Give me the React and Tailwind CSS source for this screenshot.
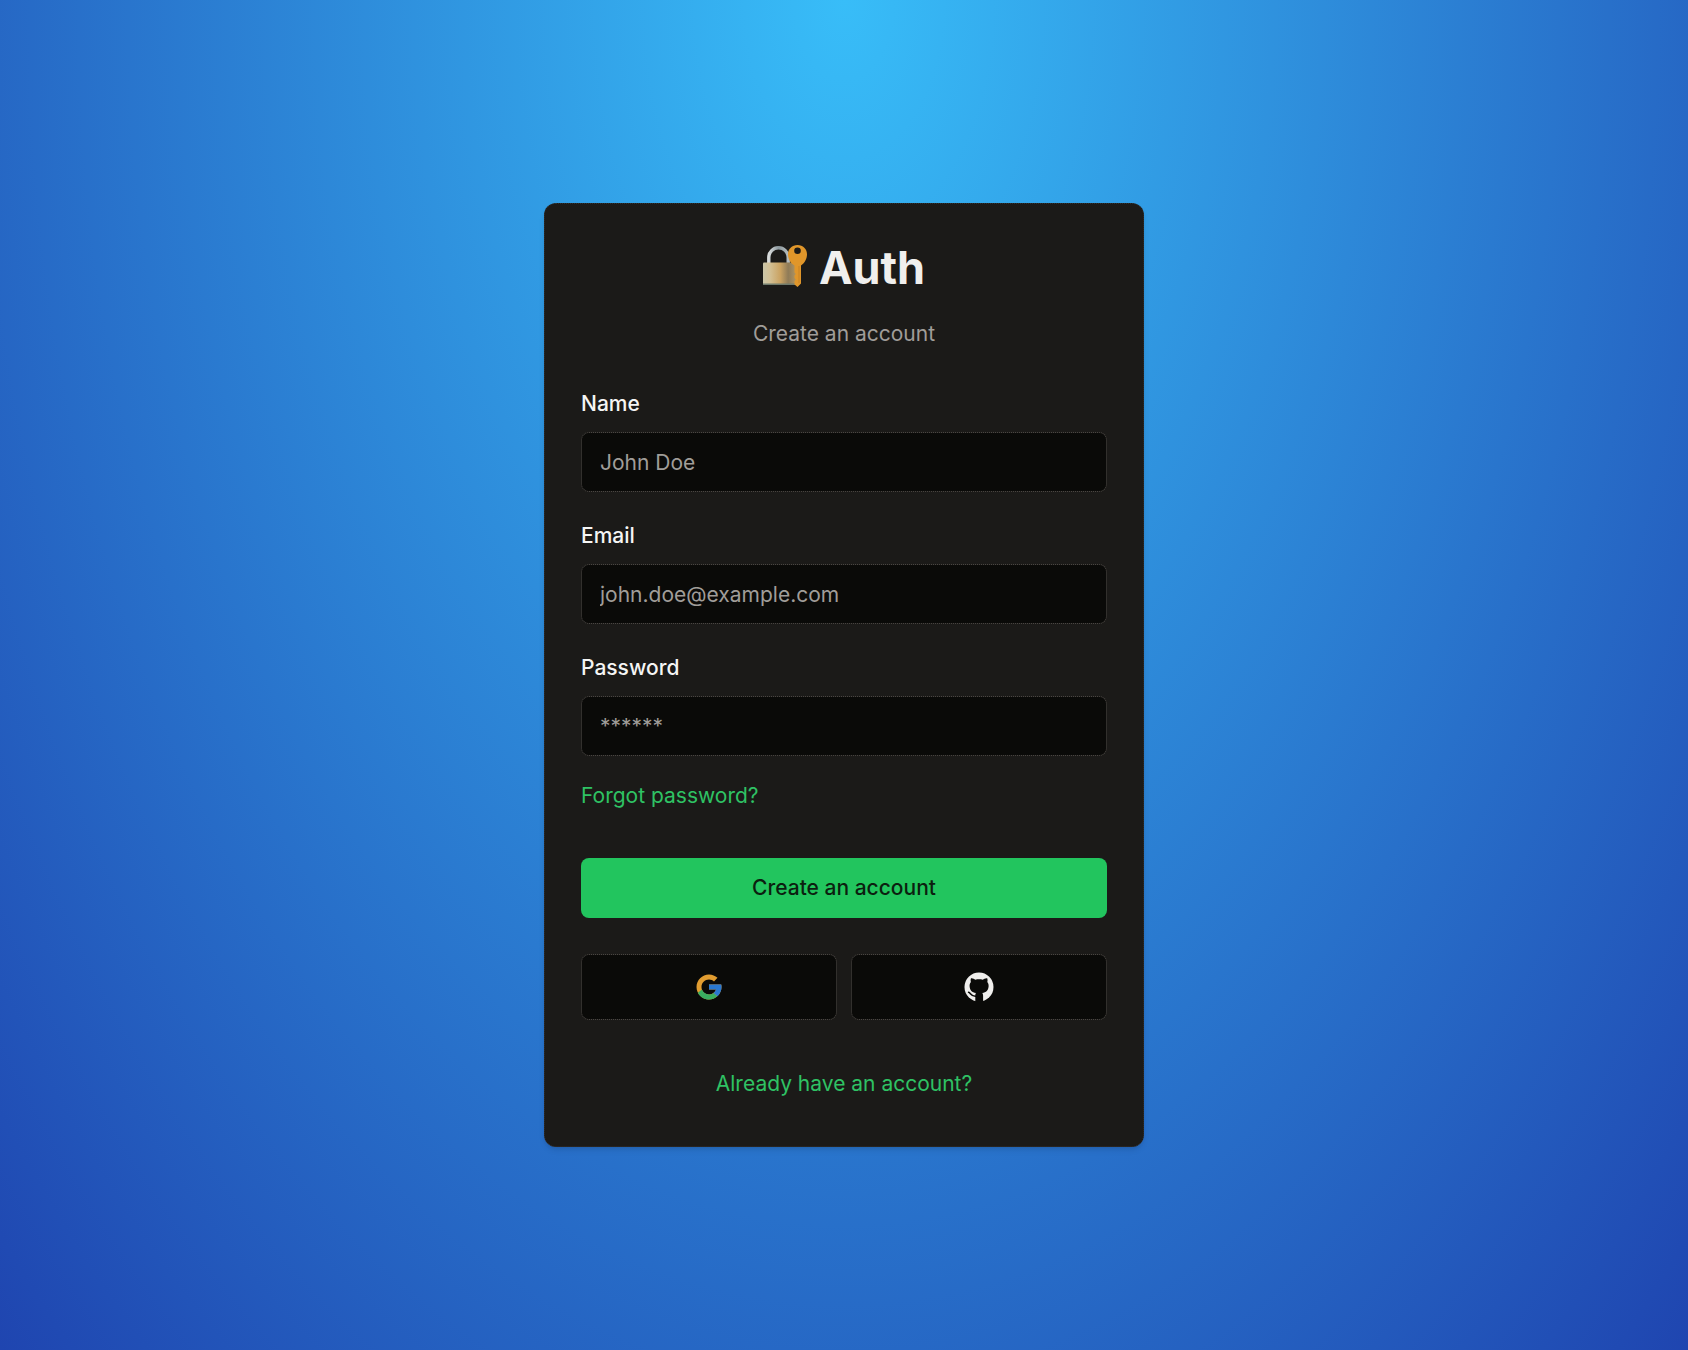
function LockAndKey() {
  return (
    <svg viewBox="0 0 44 48" className="h-12 w-11 shrink-0" aria-hidden="true">
      <defs>
        <linearGradient id="lockBody" x1="0" x2="1">
          <stop offset="0" stopColor="#cbc6a8" />
          <stop offset=".2" stopColor="#d3c094" />
          <stop offset=".5" stopColor="#caa261" />
          <stop offset=".72" stopColor="#8f7b58" />
          <stop offset="1" stopColor="#b89a62" />
        </linearGradient>
        <linearGradient id="shackle" x1="0" x2="1">
          <stop offset="0" stopColor="#d9dcdc" />
          <stop offset=".5" stopColor="#8d999e" />
          <stop offset="1" stopColor="#b5bcbe" />
        </linearGradient>
      </defs>
      <path d="M5.800 19V13.500A9.700 9.700 0 0 1 25.200 13.500V19" fill="none" stroke="url(#shackle)" strokeWidth="3.400" />
      <rect x="0" y="18.500" width="35" height="22.500" rx="1" fill="url(#lockBody)" />
      <path d="M0 40.200H35" stroke="#6f7a6c" strokeWidth="1.600" />
      <path
        fillRule="evenodd"
        fill="#e0962a"
        d="M34.500 1C40 1 44 5 44 10.200C44 15 41.500 19 38 21.500V39.500L34.500 43L31.500 40.500V37L32.800 35.500L31.500 34V31.500L32.800 30L31.500 28.500V21.500C27.500 19 25 15 25 10.200C25 5 29 1 34.500 1ZM34.500 3.500A3.300 3.300 0 1 0 34.500 10.100A3.300 3.300 0 1 0 34.500 3.500Z"
      />
      <path d="M36 22V39" stroke="#c98222" strokeWidth="1" />
    </svg>
  );
}

function GoogleMark() {
  return (
    <svg viewBox="0 0 48 48" className="size-[30px]" aria-hidden="true">
      <path fill="#e19c30" d="M43.611,20.083H42V20H24v8h11.303c-1.649,4.657-6.08,8-11.303,8c-6.627,0-12-5.373-12-12c0-6.627,5.373-12,12-12c3.059,0,5.842,1.154,7.961,3.039l5.657-5.657C34.046,6.053,29.268,4,24,4C12.955,4,4,12.955,4,24c0,11.045,8.955,20,20,20c11.045,0,20-8.955,20-20C44,22.659,43.862,21.350,43.611,20.083z" />
      <path fill="#3aae60" d="M24,44c5.166,0,9.860-1.977,13.409-5.192l-6.190-5.238C29.211,35.091,26.715,36,24,36c-5.202,0-9.619-3.317-11.283-7.946l-6.522,5.025C9.505,39.556,16.227,44,24,44z" />
      <path fill="#2a78d0" d="M43.611,20.083H42V20H24v8h11.303c-0.792,2.237-2.231,4.166-4.087,5.571l6.193,5.238C36.971,39.205,44,34,44,24C44,22.659,43.862,21.350,43.611,20.083z" />
    </svg>
  );
}

function GithubMark() {
  return (
    <svg viewBox="0 0 30 30" className="size-[30px]" aria-hidden="true">
      <mask id="cat">
        <circle cx="15" cy="15" r="14.500" fill="white" />
        <path
          fill="black"
          d="M7 6.300C8.600 6 10.200 6.900 11.300 7.700C13.700 7.100 16.500 7.100 18.800 7.700C20 6.900 21.500 6 23.200 6.300C23.700 7.700 23.600 9 23.300 10C24.300 11.200 24.800 12.600 24.600 14.500C24.300 18.300 22.300 20.400 18.200 21C18.900 21.800 19.100 22.700 19.100 24V30H11.300V24C11.300 22.700 11.400 21.800 12 21C7.900 20.400 5.900 18.300 5.600 14.500C5.400 12.600 5.900 11.200 6.900 10C6.600 9 6.500 7.700 7 6.300Z"
        />
        <path d="M4.600 20.300C6.600 20.800 7 24.700 12 24.200" fill="none" stroke="black" strokeWidth="1.600" strokeLinecap="round" />
      </mask>
      <rect width="30" height="30" fill="currentColor" mask="url(#cat)" />
    </svg>
  );
}

function Field({ id, label, type, placeholder }) {
  return (
    <div className="flex flex-col gap-3.5">
      <label htmlFor={id} className="text-[21px] leading-7 font-medium text-[#f5f5f4]">
        {label}
      </label>
      <input
        id={id}
        type={type}
        placeholder={placeholder}
        className="h-[60px] w-full rounded-lg border border-dotted border-[#4a4642] bg-[#0a0a08] bg-clip-padding px-[18px] text-[21px] text-[#f5f5f4] outline-none placeholder:text-[#a09d99] focus:border-green-500"
      />
    </div>
  );
}

function SocialButton({ label, children }) {
  return (
    <button
      type="button"
      aria-label={label}
      className="flex h-[66px] flex-1 items-center justify-center rounded-lg border border-dotted border-[#4a4642] bg-[#0a0a08] bg-clip-padding text-[#f0efed]"
    >
      {children}
    </button>
  );
}

export default function App() {
  return (
    <main className="flex min-h-screen items-center justify-center bg-[radial-gradient(ellipse_at_top,#38bdf8,#1f45b0)] font-['Inter',sans-serif]">
      <section className="w-full max-w-[600px] rounded-xl border border-dotted border-[#35312e] bg-[#1b1a18] px-9 pt-9 pb-12 shadow-md">
        <header className="flex flex-col items-center gap-6">
          <h1 className="flex items-center gap-3 text-[45px] leading-[56px] font-bold text-[#f0efed]">
            <LockAndKey />
            Auth
          </h1>
          <p className="text-[21px] leading-7 text-[#a09d99]">Create an account</p>
        </header>

        <form className="mt-[42px]" onSubmit={(e) => e.preventDefault()}>
          <div className="flex flex-col gap-[30px]">
            <Field id="name" label="Name" type="text" placeholder="John Doe" />
            <Field id="email" label="Email" type="email" placeholder="john.doe@example.com" />
            <Field id="password" label="Password" type="password" placeholder="******" />
          </div>
          <a href="#forgot" className="mt-[26px] block w-fit text-[21px] leading-7 text-[#2fc264]">
            Forgot password?
          </a>
          <button type="submit" className="mt-12 h-[60px] w-full rounded-lg bg-[#22c55e] text-[21px] font-medium text-[#0c1f10]">
            Create an account
          </button>
        </form>

        <div className="mt-9 flex gap-3.5">
          <SocialButton label="Continue with Google">
            <GoogleMark />
          </SocialButton>
          <SocialButton label="Continue with GitHub">
            <GithubMark />
          </SocialButton>
        </div>

        <a href="#login" className="mx-auto mt-[50px] block w-fit text-[21px] leading-7 text-[#2fc264]">
          Already have an account?
        </a>
      </section>
    </main>
  );
}
